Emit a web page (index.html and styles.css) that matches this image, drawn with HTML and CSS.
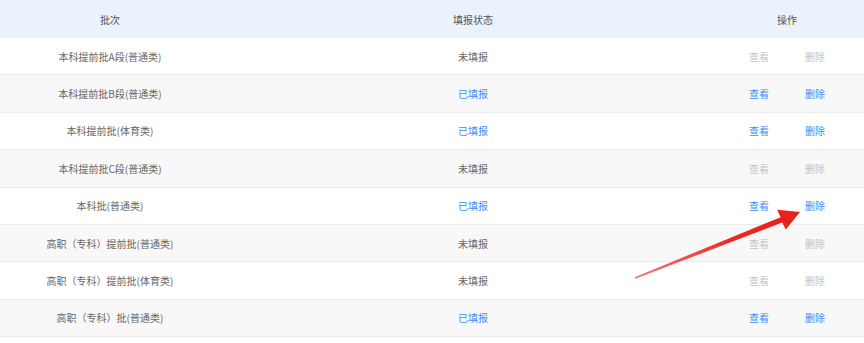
FILE: index.html
```html
<!DOCTYPE html>
<html lang="zh-CN">
<head>
  <meta charset="UTF-8">
  <title>批次填报</title>
  <link rel="stylesheet" href="styles.css">
</head>
<body>
  <div class="table-wrap">
    <div class="row head">
      <div class="cell">批次</div>
      <div class="cell">填报状态</div>
      <div class="cell ops">操作</div>
    </div>
    <div class="row">
      <div class="cell">本科提前批A段(普通类)</div>
      <div class="cell">未填报</div>
      <div class="cell ops"><span class="act off">查看</span><span class="act off">删除</span></div>
    </div>
    <div class="row">
      <div class="cell">本科提前批B段(普通类)</div>
      <div class="cell done">已填报</div>
      <div class="cell ops"><span class="act">查看</span><span class="act">删除</span></div>
    </div>
    <div class="row">
      <div class="cell">本科提前批(体育类)</div>
      <div class="cell done">已填报</div>
      <div class="cell ops"><span class="act">查看</span><span class="act">删除</span></div>
    </div>
    <div class="row">
      <div class="cell">本科提前批C段(普通类)</div>
      <div class="cell">未填报</div>
      <div class="cell ops"><span class="act off">查看</span><span class="act off">删除</span></div>
    </div>
    <div class="row">
      <div class="cell">本科批(普通类)</div>
      <div class="cell done">已填报</div>
      <div class="cell ops"><span class="act">查看</span><span class="act">删除</span></div>
    </div>
    <div class="row">
      <div class="cell">高职（专科）提前批(普通类)</div>
      <div class="cell">未填报</div>
      <div class="cell ops"><span class="act off">查看</span><span class="act off">删除</span></div>
    </div>
    <div class="row">
      <div class="cell">高职（专科）提前批(体育类)</div>
      <div class="cell">未填报</div>
      <div class="cell ops"><span class="act off">查看</span><span class="act off">删除</span></div>
    </div>
    <div class="row">
      <div class="cell">高职（专科）批(普通类)</div>
      <div class="cell done">已填报</div>
      <div class="cell ops"><span class="act">查看</span><span class="act">删除</span></div>
    </div>

    <!-- annotation arrow drawn over the table -->
    <svg class="arrow" width="864" height="343" viewBox="0 0 864 343" xmlns="http://www.w3.org/2000/svg">
      <defs>
        <linearGradient id="arrowFill" x1="635" y1="278" x2="800" y2="212" gradientUnits="userSpaceOnUse">
          <stop offset="0" stop-color="#f04a40" stop-opacity="0.75"/>
          <stop offset="0.6" stop-color="#ea2a20"/>
          <stop offset="1" stop-color="#e6211a"/>
        </linearGradient>
      </defs>
      <polygon fill="url(#arrowFill)" points="634.6,277.2 780.6,217.2 777.2,209.8 800,212 785.8,229.6 782.2,222.4 635.4,278.8"/>
    </svg>
  </div>
</body>
</html>
```

FILE: styles.css
```css
html, body {
  margin: 0;
  padding: 0;
  background: #fff;
}

body {
  font-family: "Noto Sans CJK SC", "Noto Sans", sans-serif;
  font-size: 10px;
  color: #666;
}

.table-wrap {
  position: relative;
  width: 864px;
}

.row {
  display: grid;
  grid-template-columns: 220px 506px 1fr;
  height: 37.4px;
  box-sizing: border-box;
  border-bottom: 1px solid #ececec;
  background: #fff;
}

.row:nth-child(odd) {
  background: #f8f8f8;
}

.row.head {
  height: 38px;
  background: #eaf2fd;
  border-bottom: none;
  color: #555;
}

.cell {
  display: flex;
  align-items: center;
  justify-content: center;
}

.cell.ops {
  padding-right: 16px;
  gap: 36px;
}

.done {
  color: #3d8ef0;
}

.act {
  color: #3d8ef0;
  cursor: pointer;
}

.act.off {
  color: #c4c4c4;
  cursor: default;
}

.arrow {
  position: absolute;
  left: 0;
  top: 0;
  pointer-events: none;
}
```
